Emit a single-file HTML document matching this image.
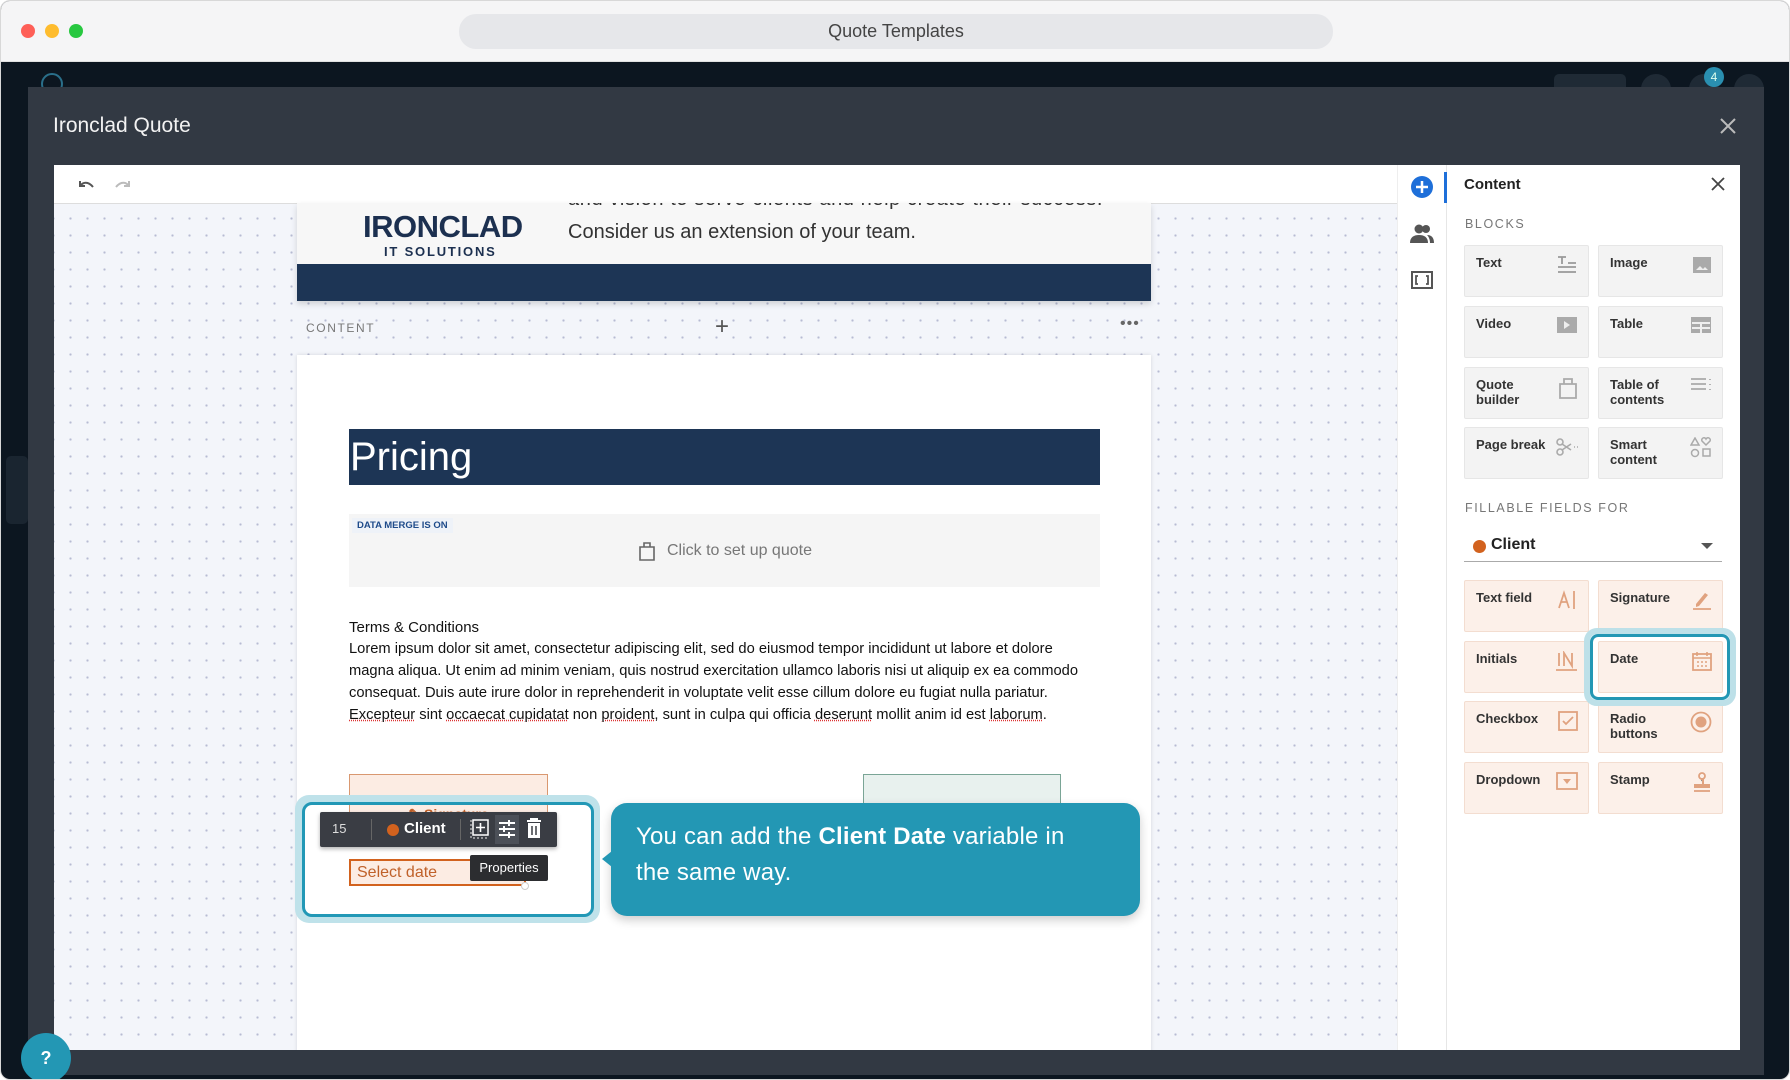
<!DOCTYPE html>
<html><head><meta charset="utf-8"><style>
*{box-sizing:border-box;margin:0;padding:0}
body{width:1790px;height:1080px;overflow:hidden;background:#fff;font-family:"Liberation Sans",sans-serif;position:relative}
.abs{position:absolute}
.win{left:0;top:0;width:1790px;height:1080px;border-radius:10px;background:#0c1620;overflow:hidden;border:1px solid #d8d8d8}
.tbar{left:0;top:0;width:1790px;height:61px;background:#f5f5f6;border-bottom:1px solid #e0e0e0}
.dot{width:14px;height:14px;border-radius:50%;top:23px}
.dots{background-color:#f3f5fa;background-image:radial-gradient(circle,#b7bbd3 1px,transparent 1.3px);background-size:17px 17px;background-position:8px 6px}
.tile{position:absolute;width:125px;height:52px;background:#f3f3f3;border:1px solid #e6e6e6;border-radius:2px;font-size:13px;font-weight:bold;color:#333;padding:9px 11px;line-height:15px}
.tile svg{position:absolute;right:10px;top:9px}
.ft{background:#fcf0e9;border-color:#f3ddd0}
.cap{font-size:12.5px;letter-spacing:1.6px;color:#777}
.p{font-size:14.7px;color:#111;line-height:22px}
.u{text-decoration:underline dotted #d33}
</style></head><body>
<div class="abs win">
 <div class="abs tbar">
  <div class="abs dot" style="left:20px;background:#fe5f57"></div>
  <div class="abs dot" style="left:44px;background:#febc2e"></div>
  <div class="abs dot" style="left:68px;background:#28c840"></div>
  <div class="abs" style="left:458px;top:13px;width:874px;height:35px;border-radius:17px;background:#e6e7ea;text-align:center;font-size:18px;line-height:35px;color:#444">Quote Templates</div>
 </div>
 <div class="abs" style="left:40px;top:72px;width:22px;height:22px;border:2px solid #2a6f8a;border-radius:50%"></div>
 <div class="abs" style="left:1553px;top:73px;width:72px;height:24px;border-radius:5px;background:#1f2a35"></div>
 <div class="abs" style="left:1640px;top:73px;width:30px;height:30px;border-radius:50%;background:#1f2a35"></div>
 <div class="abs" style="left:1688px;top:73px;width:30px;height:30px;border-radius:50%;background:#1f2a35"></div>
 <div class="abs" style="left:1703px;top:66px;width:20px;height:20px;border-radius:50%;background:#2a8fb0;color:#dfe;font-size:12px;text-align:center;line-height:20px">4</div>
 <div class="abs" style="left:1733px;top:73px;width:30px;height:30px;border-radius:50%;background:#1f2a35"></div>
 <div class="abs" style="left:5px;top:455px;width:22px;height:68px;border-radius:5px;background:#1a2530"></div>
 <div class="abs" style="left:27px;top:86px;width:1736px;height:988px;background:#323943">
  <div class="abs" style="left:25px;top:27px;font-size:21px;color:#f2f2f2">Ironclad Quote</div>
  <svg class="abs" style="left:1691px;top:30px" width="18" height="18"><path d="M2 2L16 16M16 2L2 16" stroke="#bbb" stroke-width="2"/></svg>
 </div>
 <div class="abs" style="left:53px;top:164px;width:1686px;height:885px;background:#fff;overflow:hidden">
  <svg class="abs" style="left:22px;top:12px" width="60" height="16"><path d="M4 4v5h5M4 9c3-4 8-5 13 1" fill="none" stroke="#555" stroke-width="2"/><path d="M53 4v5h-5M53 9c-3-4-8-5-13 1" fill="none" stroke="#bbb" stroke-width="2"/></svg>
  <div class="abs" style="left:0;top:38px;width:1343px;height:1px;background:#ddd"></div>
  <div class="abs dots" style="left:0;top:39px;width:1343px;height:846px"></div>
  <div class="abs" style="left:243px;top:38px;width:854px;height:98px;background:#f7f7f7;box-shadow:0 3px 6px rgba(0,0,0,.15);overflow:hidden">
   <div class="abs" style="left:66px;top:6px;font-size:31px;font-weight:bold;color:#1c3050;letter-spacing:-0.5px">IRONCLAD</div>
   <div class="abs" style="left:87px;top:41px;font-size:13px;font-weight:bold;color:#1c3050;letter-spacing:1.8px">IT SOLUTIONS</div>
   <div class="abs" style="left:271px;top:-15px;font-size:20px;color:#333;white-space:nowrap;letter-spacing:0.6px">and vision to serve clients and help create their success.</div>
   <div class="abs" style="left:271px;top:18px;font-size:20px;color:#333;white-space:nowrap">Consider us an extension of your team.</div>
   <div class="abs" style="left:0;top:61px;width:854px;height:37px;background:#1d3555"></div>
  </div>
  <div class="abs cap" style="left:252px;top:156px;font-size:12px">CONTENT</div>
  <div class="abs" style="left:661px;top:148px;font-size:24px;color:#555;font-weight:300">+</div>
  <div class="abs" style="left:1066px;top:150px;font-size:16px;color:#666;letter-spacing:1px">•••</div>
  <div class="abs" style="left:243px;top:190px;width:854px;height:700px;background:#fff;box-shadow:0 0 4px rgba(0,0,0,.12)">
   <div class="abs" style="left:52px;top:74px;width:751px;height:56px;background:#1d3555;color:#fff;font-size:40px;line-height:56px;padding-left:1px">Pricing</div>
   <div class="abs" style="left:52px;top:159px;width:751px;height:73px;background:#f5f5f5">
    <div class="abs" style="left:3px;top:4px;padding:2px 5px;background:#eef2f8;color:#1e4b8a;font-size:9.5px;font-weight:bold">DATA MERGE IS ON</div>
    <svg class="abs" style="left:289px;top:27px" width="18" height="20"><path d="M2 6h14v13H2zM6 6V2h6v4" fill="none" stroke="#666" stroke-width="1.6"/></svg>
    <div class="abs" style="left:318px;top:28px;font-size:16px;color:#777">Click to set up quote</div>
   </div>
   <div class="abs p" style="left:52px;top:262px;font-size:15px">Terms &amp; Conditions</div>
   <div class="abs p" style="left:52px;top:283px;width:745px">Lorem ipsum dolor sit amet, consectetur adipiscing elit, sed do eiusmod tempor incididunt ut labore et dolore magna aliqua. Ut enim ad minim veniam, quis nostrud exercitation ullamco laboris nisi ut aliquip ex ea commodo consequat. Duis aute irure dolor in reprehenderit in voluptate velit esse cillum dolore eu fugiat nulla pariatur. <span class="u">Excepteur</span> sint <span class="u">occaecat cupidatat</span> non <span class="u">proident</span>, sunt in culpa qui officia <span class="u">deserunt</span> mollit anim id est <span class="u">laborum</span>.</div>
   <div class="abs" style="left:52px;top:419px;width:199px;height:60px;background:#fcece3;border:1px solid #d99870"></div>
   <div class="abs" style="left:566px;top:419px;width:198px;height:60px;background:#e8f1ee;border:1px solid #7aa596"></div>
  </div>
 </div>
 <div class="abs" style="left:294px;top:794px;width:305px;height:128px;border-radius:14px;background:#bfe2ea"></div>
 <div class="abs" style="left:301px;top:801px;width:292px;height:115px;border-radius:10px;background:#fff;border:3px solid #2298b6;overflow:hidden">
  <div class="abs" style="left:44px;top:-30px;width:199px;height:60px;background:#fcece3;border:1px solid #d99870;text-align:center;color:#c0612a;font-weight:bold;font-size:14px;padding-top:30px">✎ Signature</div>
 </div>
 <div class="abs" style="left:319px;top:811px;width:237px;height:35px;background:#3a3d44;border-radius:2px;box-shadow:0 2px 4px rgba(0,0,0,.3)">
  <div class="abs" style="left:12px;top:9px;color:#ddd;font-size:13px">15</div>
  <div class="abs" style="left:51px;top:7px;width:1px;height:21px;background:#666"></div>
  <div class="abs" style="left:67px;top:12px;width:12px;height:12px;border-radius:50%;background:#d2621e"></div>
  <div class="abs" style="left:84px;top:8px;color:#fff;font-size:15px;font-weight:bold">Client</div>
  <div class="abs" style="left:140px;top:7px;width:1px;height:21px;background:#666"></div>
  <svg class="abs" style="left:149px;top:6px" width="22" height="22"><rect x="4" y="2" width="15" height="15" fill="none" stroke="#fff" stroke-width="1.5"/><path d="M11.5 5v9M7 9.5h9" stroke="#fff" stroke-width="1.6"/><path d="M2 2v18h18" fill="none" stroke="#ccc" stroke-width="1.2" stroke-dasharray="2 2"/></svg>
  <div class="abs" style="left:175px;top:3px;width:24px;height:29px;background:#4c5058"></div>
  <svg class="abs" style="left:178px;top:7px" width="18" height="20"><path d="M1 4h16M1 10h16M1 16h16" stroke="#fff" stroke-width="2"/><path d="M11 1v6M6 7v6M11 13v6" stroke="#fff" stroke-width="2"/></svg>
  <svg class="abs" style="left:206px;top:6px" width="16" height="22"><path d="M1 3h14M5 3V1h6v2" stroke="#fff" stroke-width="2" fill="none"/><rect x="2" y="5" width="12" height="15" fill="#fff"/><path d="M6 8v9M10 8v9" stroke="#3a3d44" stroke-width="1.5"/></svg>
 </div>
 <div class="abs" style="left:348px;top:858px;width:177px;height:27px;background:#fcece3;border:2px solid #d2621e;color:#c0612a;font-size:16px;padding:3px 6px">Select date</div>
 <div class="abs" style="left:520px;top:881px;width:8px;height:8px;border-radius:50%;background:#fff;border:1px solid #ccc"></div>
 <div class="abs" style="left:469px;top:854px;width:78px;height:26px;background:#2c2d30;color:#fff;font-size:13px;text-align:center;line-height:26px;border-radius:2px">Properties</div>
 <div class="abs" style="left:610px;top:802px;width:529px;height:113px;background:#2397b4;border-radius:16px;box-shadow:0 4px 10px rgba(0,0,0,.2);color:#fff;font-size:24px;line-height:36px;padding:16px 50px 16px 25px;letter-spacing:0.2px">You can add the <b>Client Date</b> variable in the same way.</div>
 <div class="abs" style="left:601px;top:850px;width:0;height:0;border-top:8px solid transparent;border-bottom:8px solid transparent;border-right:10px solid #2397b4"></div>
 <div class="abs" style="left:1396px;top:164px;width:50px;height:885px;background:#fff;border-left:1px solid #eee;border-right:1px solid #e6e6e6"></div>
 <svg class="abs" style="left:1410px;top:175px" width="22" height="22"><circle cx="11" cy="11" r="11" fill="#1e6fd9"/><path d="M11 5v12M5 11h12" stroke="#fff" stroke-width="2.5"/></svg>
 <div class="abs" style="left:1443px;top:171px;width:3px;height:31px;background:#1e6fd9"></div>
 <svg class="abs" style="left:1409px;top:223px" width="24" height="20"><circle cx="9" cy="5" r="4.5" fill="#555"/><circle cx="16" cy="5" r="4" fill="#555"/><path d="M0 19c0-6 4-8 9-8s9 2 9 8z" fill="#555"/><path d="M17 11c4 0 7 2 7 8h-4c0-3-1-6-3-8z" fill="#555"/></svg>
 <svg class="abs" style="left:1410px;top:270px" width="22" height="18"><rect x="1" y="1" width="20" height="16" fill="none" stroke="#555" stroke-width="2"/><path d="M7 5H5v8h2M15 5h2v8h-2" fill="none" stroke="#555" stroke-width="1.8"/></svg>
 <div class="abs" style="left:1446px;top:164px;width:293px;height:885px;background:#fff">
  <div class="abs" style="left:17px;top:11px;font-size:15px;font-weight:bold;color:#222">Content</div>
  <svg class="abs" style="left:264px;top:12px" width="14" height="14"><path d="M1 1L13 13M13 1L1 13" stroke="#444" stroke-width="1.8"/></svg>
  <div class="abs cap" style="left:18px;top:52px">BLOCKS</div>
  <div class="abs cap" style="left:18px;top:336px">FILLABLE FIELDS FOR</div>
  <div class="abs" style="left:26px;top:375px;width:13px;height:13px;border-radius:50%;background:#d2621e"></div>
  <div class="abs" style="left:44px;top:371px;font-size:16px;font-weight:bold;color:#222">Client</div>
  <div class="abs" style="left:254px;top:378px;border-left:6px solid transparent;border-right:6px solid transparent;border-top:6px solid #555"></div>
  <div class="abs" style="left:17px;top:396px;width:258px;height:1px;background:#aaa"></div>
 </div>
 <div class="tile" style="left:1463px;top:244px">Text<svg width="22" height="20"><path d="M2 2h8M6 2v7M12 8h8M2 12h18M2 17h18" stroke="#999" stroke-width="1.8"/></svg></div>
 <div class="tile" style="left:1597px;top:244px">Image<svg width="20" height="20"><rect x="1" y="2" width="18" height="16" fill="#aaa"/><path d="M4 15l4-4 3 3 2-2 3 3z" fill="#eee"/></svg></div>
 <div class="tile" style="left:1463px;top:305px">Video<svg width="22" height="18"><rect x="1" y="1" width="20" height="16" fill="#aaa"/><path d="M8 5v8l6-4z" fill="#eee"/></svg></div>
 <div class="tile" style="left:1597px;top:305px">Table<svg width="22" height="18"><rect x="1" y="1" width="20" height="16" fill="#aaa"/><path d="M2 7h18M2 12h18M11 7v10" stroke="#eee" stroke-width="2"/></svg></div>
 <div class="tile" style="left:1463px;top:366px">Quote<br>builder<svg width="20" height="22"><path d="M2 7h16v14H2zM6 7V2h8v5" fill="none" stroke="#aaa" stroke-width="1.8"/></svg></div>
 <div class="tile" style="left:1597px;top:366px">Table of<br>contents<svg width="22" height="16"><path d="M1 2h15M1 7h15M1 12h15M20 2v1M20 7v1M20 12v1" stroke="#aaa" stroke-width="1.8"/></svg></div>
 <div class="tile" style="left:1463px;top:426px">Page break<svg width="22" height="20"><circle cx="4" cy="5" r="3" fill="none" stroke="#aaa" stroke-width="1.6"/><circle cx="4" cy="15" r="3" fill="none" stroke="#aaa" stroke-width="1.6"/><path d="M6 7l9 6M6 13l9-6M18 10h1M21 10h1" stroke="#aaa" stroke-width="1.6"/></svg></div>
 <div class="tile" style="left:1597px;top:426px">Smart<br>content<svg width="22" height="22"><path d="M5 1l4 7H1z" fill="none" stroke="#aaa" stroke-width="1.5"/><path d="M16 8l-4-4a2 2 0 014-2 2 2 0 014 2z" fill="none" stroke="#aaa" stroke-width="1.5"/><circle cx="5" cy="16" r="3.5" fill="none" stroke="#aaa" stroke-width="1.5"/><rect x="13" y="12" width="7" height="7" fill="none" stroke="#aaa" stroke-width="1.5"/></svg></div>
 <div class="tile ft" style="left:1463px;top:579px">Text field<svg width="20" height="20"><path d="M1 18L6 3l5 15M3 12h6M16 1v18" fill="none" stroke="#e0a27f" stroke-width="1.8"/></svg></div>
 <div class="tile ft" style="left:1597px;top:579px">Signature<svg width="20" height="20"><path d="M4 14l9-11 3 2-9 11-3 1z" fill="#e0a27f"/><path d="M1 19h18" stroke="#e0a27f" stroke-width="1.8"/></svg></div>
 <div class="tile ft" style="left:1463px;top:640px">Initials<svg width="22" height="20"><path d="M3 2v13M8 15V2l8 13V2" fill="none" stroke="#e0a27f" stroke-width="1.8"/><path d="M0 19h21" stroke="#e0a27f" stroke-width="1.8"/></svg></div>
 <div class="tile ft" style="left:1597px;top:640px">Date<svg width="20" height="20"><rect x="1" y="3" width="18" height="16" fill="none" stroke="#e0a27f" stroke-width="1.8"/><path d="M1 7h18M5 1v4M15 1v4M5 11h2M9 11h2M13 11h2M5 15h2M9 15h2M13 15h2" stroke="#e0a27f" stroke-width="1.6"/></svg></div>
 <div class="tile ft" style="left:1463px;top:700px">Checkbox<svg width="20" height="20"><rect x="1" y="1" width="18" height="18" fill="none" stroke="#e0a27f" stroke-width="1.8"/><path d="M5 10l3 3 7-7" fill="none" stroke="#e0a27f" stroke-width="1.8"/></svg></div>
 <div class="tile ft" style="left:1597px;top:700px">Radio<br>buttons<svg width="22" height="22"><circle cx="11" cy="11" r="9.5" fill="none" stroke="#e0a27f" stroke-width="1.8"/><circle cx="11" cy="11" r="5.5" fill="#e0a27f"/></svg></div>
 <div class="tile ft" style="left:1463px;top:761px">Dropdown<svg width="22" height="18"><rect x="1" y="1" width="20" height="16" fill="none" stroke="#e0a27f" stroke-width="1.8"/><path d="M7 7h8l-4 5z" fill="#e0a27f"/></svg></div>
 <div class="tile ft" style="left:1597px;top:761px">Stamp<svg width="20" height="20"><circle cx="10" cy="4" r="3" fill="none" stroke="#e0a27f" stroke-width="1.8"/><path d="M9 7h2v5" stroke="#e0a27f" stroke-width="2"/><rect x="2" y="12" width="16" height="4" fill="#e0a27f"/><path d="M2 19h16" stroke="#e0a27f" stroke-width="1.8"/></svg></div>
 <div class="abs" style="left:1583px;top:627px;width:152px;height:78px;border-radius:13px;border:6px solid #bde0e8"></div>
 <div class="abs" style="left:1589px;top:633px;width:140px;height:66px;border-radius:8px;border:3px solid #2397b4"></div>
 <div class="abs" style="left:20px;top:1032px;width:50px;height:50px;border-radius:50%;background:#2397b4;color:#fff;font-weight:bold;font-size:18px;text-align:center;line-height:50px">?</div>
</div>
</body></html>
